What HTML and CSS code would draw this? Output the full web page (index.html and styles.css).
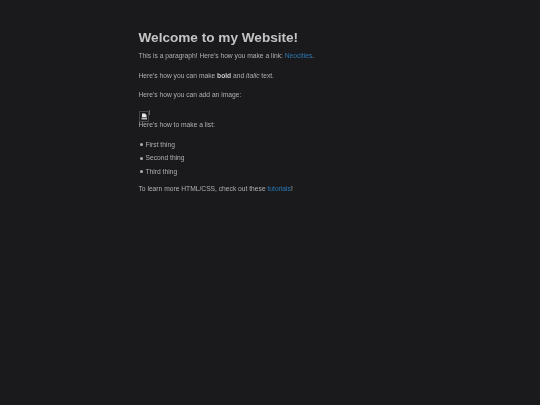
FILE: index.html
```html
<!DOCTYPE html>
<html lang="en">
<head>
  <meta charset="UTF-8">
  <title>Welcome to my Website!</title>
  <link rel="stylesheet" href="styles.css">
</head>
<body>

  <main class="content">
    <h1>Welcome to my Website!</h1>
    <p>This is a paragraph! Here's how you make a link: <a href="#">Neocities</a>.</p>
    <p>Here's how you can make <strong>bold</strong> and <em>italic</em> text.</p>
    <p>Here's how you can add an image:</p>

    <!-- Broken image placeholder -->
    <svg class="broken-img" width="11" height="13" viewBox="0 0 11 13">
      <rect x="0.5" y="1.5" width="9" height="10" fill="none" stroke="#444"/>
      <path d="M3 3.5h3l1.5 1.5v2H3z" fill="#e8e8e8"/>
      <rect x="2.5" y="7.5" width="5.5" height="2" fill="#bbb"/>
      <path d="M10.5 0v5" stroke="#666"/>
    </svg>

    <p class="list-intro">Here's how to make a list:</p>
    <ul>
      <li>First thing</li>
      <li>Second thing</li>
      <li>Third thing</li>
    </ul>
    <p>To learn more HTML/CSS, check out these <a href="#">tutorials</a>!</p>
  </main>

</body>
</html>
```

FILE: styles.css
```css
/* Dark page with a narrow centered column */
body {
  margin: 0;
  background-color: #1a1a1c;
  color: #b0b0b0;
  font-family: "Liberation Sans", Arial, sans-serif;
  font-size: 6.7px;
  line-height: 10px;
}
.content {
  width: 263px;
  margin: 0 auto;
  padding-top: 29px;
  filter: blur(0.35px);
}
h1 {
  margin: 0 0 5px;
  color: #c4c4c4;
  font-size: 13.6px;
  line-height: 17px;
}
p {
  margin: 0 0 9.5px;
}
a {
  color: #2a78b4;
  text-decoration: none;
}
strong {
  color: #c8c8c8;
}
.broken-img {
  display: block;
  margin-bottom: -3px;
}
.list-intro {
  margin-bottom: 0;
}
ul {
  margin: 10px 0 7px;
  padding: 0 0 0 1px;
  list-style: none;
}
li {
  display: flex;
  align-items: center;
  gap: 3px;
  margin-bottom: 3.6px;
}
li::before {
  content: "";
  width: 3px;
  height: 3px;
  border-radius: 50%;
  background-color: #b0b0b0;
}
```
